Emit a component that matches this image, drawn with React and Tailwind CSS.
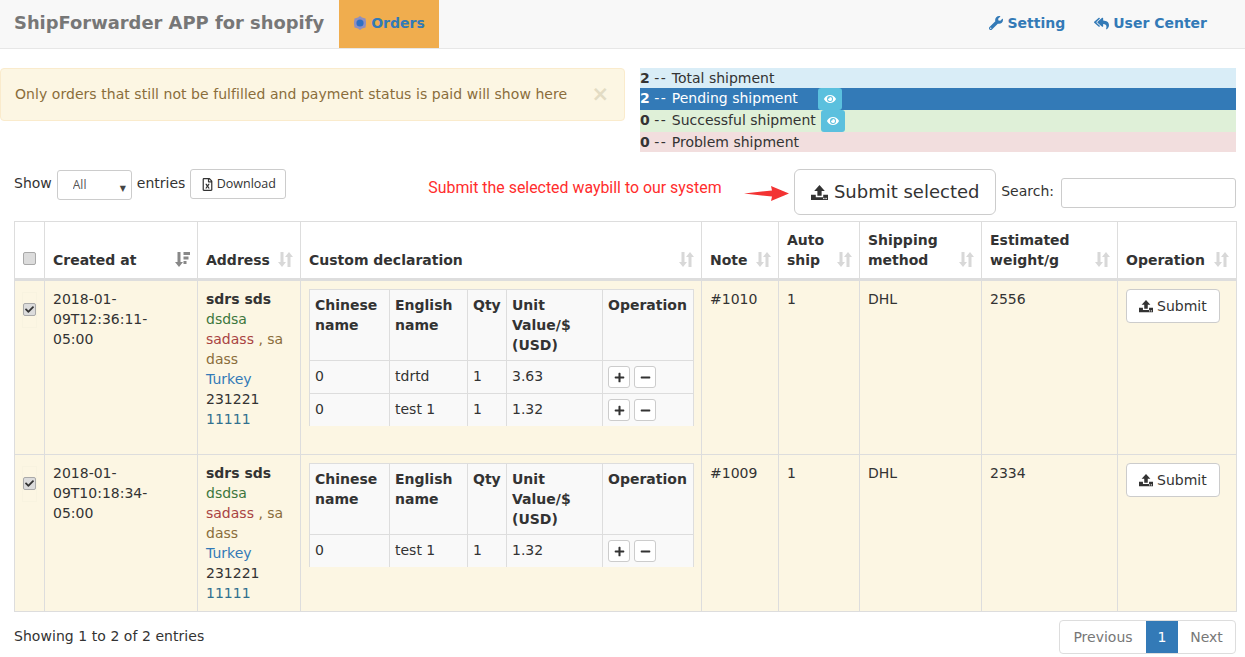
import { FaWrench, FaReplyAll, FaEye, FaPlus, FaMinus, FaRegFileExcel, FaCheck } from "react-icons/fa";

const UploadIcon = ({ size = 14 }) => (
  <svg width={size} height={size} viewBox="0 0 16 16" fill="currentColor" aria-hidden="true">
    <path d="M8 1 L13 6.5 H10 V11 H6 V6.5 H3 Z" />
    <path d="M0 10 H4.5 V12.5 H11.5 V10 H16 V15 H0 Z" />
    <rect x="11.5" y="13" width="1.2" height="1.2" fill="#fff" />
    <rect x="13.6" y="13" width="1.2" height="1.2" fill="#fff" />
  </svg>
);

const SortIcon = ({ active }) => (
  <svg width="15" height="15" viewBox="0 0 15 15" fill={active ? "#888" : "#d8d8d8"} aria-hidden="true">
    <path d="M2.5 0 H5.5 V10 H8 L4 15 L0 10 H2.5 Z" />
    {active ? (
      <path d="M8.5 0 H15 V3 H8.5 Z M8.5 4.5 H13.5 V7.5 H8.5 Z M8.5 9 H11.5 V12 H8.5 Z" />
    ) : (
      <path d="M9.5 15 H12.5 V5 H15 L11 0 L7 5 H9.5 Z" />
    )}
  </svg>
);

const OrdersIcon = () => (
  <svg width="14" height="14" viewBox="0 0 14 14" aria-hidden="true">
    <path d="M7 0 L9 1.5 L12.5 2.5 L13 6 L13 8 L12.5 11.5 L9 12.5 L7 14 L5 12.5 L1.5 11.5 L1 8 L1 6 L1.5 2.5 L5 1.5 Z" fill="#8e8fc0" />
    <circle cx="7" cy="7" r="3.6" fill="#2f6fc4" />
  </svg>
);

const Check = ({ checked }) => (
  <span className="relative block w-[13px] h-[13px]">
    <input
      type="checkbox"
      readOnly
      checked={checked}
      className="appearance-none block w-[13px] h-[13px] m-0 rounded-[2px] border border-[#a9a9a9] bg-[#dcdcdc]"
    />
    {checked && <FaCheck className="absolute left-[2px] top-[2px] text-[9px] text-[#333] pointer-events-none" />}
  </span>
);

const Th = ({ children, className = "", sort = true, active = false }) => (
  <th className={`relative border border-[#ddd] border-b-[3px] p-2 text-left align-bottom font-bold leading-5 ${className}`}>
    {children}
    {sort && (
      <span className="absolute right-[7px] bottom-[11px] leading-none">
        <SortIcon active={active} />
      </span>
    )}
  </th>
);

const Td = ({ children, className = "" }) => (
  <td className={`border border-[#ddd] p-2 align-top leading-5 ${className}`}>{children}</td>
);

const InTh = ({ children, className = "" }) => (
  <th className={`border border-[#ddd] p-[5px] text-left align-top font-bold leading-5 ${className}`}>{children}</th>
);

const InTd = ({ children, last }) => (
  <td className={`border border-[#ddd] p-[5px] align-top leading-5 ${last ? "border-b-0" : ""}`}>{children}</td>
);

const XsBtn = ({ children }) => (
  <span className="inline-flex w-[22px] h-[22px] items-center justify-center rounded-[3px] border border-[#ccc] bg-white text-[11px] text-[#333]">
    {children}
  </span>
);

function InnerTable({ items }) {
  return (
    <table className="table-fixed border-collapse w-[384px] mb-5 bg-[#f9f9f9]">
      <thead>
        <tr>
          <InTh className="w-[80px]">Chinese name</InTh>
          <InTh className="w-[78px]">English name</InTh>
          <InTh className="w-[39px]">Qty</InTh>
          <InTh className="w-[96px]">Unit Value/$ (USD)</InTh>
          <InTh className="w-[91px]">Operation</InTh>
        </tr>
      </thead>
      <tbody>
        {items.map((it, i) => {
          const last = i === items.length - 1;
          return (
            <tr key={i}>
              <InTd last={last}>0</InTd>
              <InTd last={last}>{it.name}</InTd>
              <InTd last={last}>1</InTd>
              <InTd last={last}>{it.value}</InTd>
              <InTd last={last}>
                <div className="flex gap-[4px]">
                  <XsBtn><FaPlus /></XsBtn>
                  <XsBtn><FaMinus /></XsBtn>
                </div>
              </InTd>
            </tr>
          );
        })}
      </tbody>
    </table>
  );
}

function OrderRow({ created, note, weight, items }) {
  return (
    <tr className="bg-[#fcf6e3]">
      <Td>
        <div className="mt-1 h-[34px] w-[13px] pt-[10px] shadow-[0_0_0_1px_#f8f3e0]">
          <Check checked />
        </div>
      </Td>
      <Td className="pr-[14px]">{created}</Td>
      <Td>
        <div className="font-bold">sdrs sds</div>
        <div className="text-[#3c763d]">dsdsa</div>
        <div>
          <span className="text-[#a94442]">sadass</span>
          <span className="text-[#8a6d3b]"> , sa</span>
        </div>
        <div className="text-[#8a6d3b]">dass</div>
        <div className="text-[#337ab7]">Turkey</div>
        <div>231221</div>
        <div className="text-[#31708f]">11111</div>
      </Td>
      <Td><InnerTable items={items} /></Td>
      <Td>{note}</Td>
      <Td>1</Td>
      <Td>DHL</Td>
      <Td>{weight}</Td>
      <Td>
        <button className="inline-flex h-[34px] items-center gap-1 rounded border border-[#ccc] bg-white px-3 text-[#333]">
          <UploadIcon /> Submit
        </button>
      </Td>
    </tr>
  );
}

const EyeBtn = () => (
  <span className="inline-flex w-6 h-[22px] items-center justify-center rounded-[3px] bg-[#5bc0de] text-[12px] text-white">
    <FaEye />
  </span>
);

const Count = ({ n }) => (
  <>
    <b>{n}</b> <span className="tracking-[1.5px]">--</span>{" "}
  </>
);

export default function App() {
  return (
    <div className="font-['DejaVu_Sans',sans-serif] text-sm leading-5 text-[#333] bg-white">
      {/* nav */}
      <nav className="flex h-[49px] items-stretch border-b border-[#e7e7e7] bg-[#f8f8f8]">
        <div className="flex w-[339px] items-center pb-[2px] pl-[14px] text-[17.9px] font-bold text-[#777]">
          ShipForwarder APP for shopify
        </div>
        <a className="flex w-[100px] items-center justify-center gap-1 bg-[#f0ad4e] pb-[2px] font-bold text-[#337ab7]">
          <OrdersIcon /> Orders
        </a>
        <div className="ml-auto flex items-center pb-[2px] pr-[38px] font-bold text-[#337ab7]">
          <a className="flex items-center gap-1"><FaWrench className="text-[14px]" /> Setting</a>
          <a className="ml-[29px] flex items-center gap-1"><FaReplyAll className="text-[15px]" /> User Center</a>
        </div>
      </nav>

      {/* alert + totals */}
      <div className="mt-[19px] flex pr-[9px]">
        <div className="flex h-[53px] w-[625px] items-center justify-between rounded border border-[#faebcc] bg-[#fcf6e3] pb-[2px] pl-[14px] pr-[15px] text-[#8a6d3b]">
          <span className="tracking-[0.05px]">Only orders that still not be fulfilled and payment status is paid will show here</span>
          <span className="text-[21px] font-bold text-[#e3dcc4]">×</span>
        </div>
        <div className="ml-[15px] flex-1">
          <div className="h-5 bg-[#d9edf7]"><Count n={2} />Total shipment</div>
          <div className="flex h-[22px] items-start bg-[#337ab7] text-white">
            <span><Count n={2} />Pending shipment</span>
            <span className="ml-5 flex"><EyeBtn /></span>
          </div>
          <div className="flex h-[22px] items-start bg-[#dff0d8]">
            <span><Count n={0} />Successful shipment</span>
            <span className="ml-[5px] flex"><EyeBtn /></span>
          </div>
          <div className="h-5 bg-[#f2dede]"><Count n={0} />Problem shipment</div>
        </div>
      </div>

      {/* toolbar */}
      <div className="mt-[17px] flex h-[46px] items-start pl-[14px] pr-[9px]">
        <span className="mt-[4px]">Show</span>
        <div className="relative ml-[5px] mt-[1px]">
          <select className="block h-[30px] w-[75px] appearance-none rounded-[3px] border border-[#ccc] bg-white pl-[15px] font-['Open_Sans',sans-serif] text-xs text-[#555]">
            <option>All</option>
          </select>
          <span className="pointer-events-none absolute right-[6px] top-[9px] text-[8px] text-[#444]">▼</span>
        </div>
        <span className="ml-[5px] mt-[4px]">entries</span>
        <button className="ml-[5px] flex h-[30px] w-[96px] items-center justify-center gap-[3px] rounded-[3px] border border-[#ccc] bg-white font-['Open_Sans',sans-serif] text-[12.5px] text-[#333]">
          <FaRegFileExcel className="text-[13px]" /> Download
        </button>
        <span className="ml-[142px] mt-[9px] font-['Roboto',sans-serif] text-[15.9px] text-[#ff2d2d]">
          Submit the selected waybill to our system
        </span>
        <span className="flex-1" />
        <svg className="mt-[17px]" width="45" height="15" viewBox="0 0 45 15" aria-hidden="true">
          <path d="M0 7.5 L28 4.5 L27 0 L45 7.5 L27 15 L28 10.5 Z" fill="#f33333" />
        </svg>
        <button className="ml-[5px] flex h-[46px] w-[202px] items-center justify-center gap-[6px] rounded-md border border-[#ccc] bg-white text-[18px] text-[#333]">
          <UploadIcon size={17} /> Submit selected
        </button>
        <span className="ml-[5px] mt-[12px]">Search:</span>
        <input className="ml-[7px] mt-[9px] h-[30px] w-[175px] rounded-[3px] border border-[#ccc] bg-white" />
      </div>

      {/* orders */}
      <div className="mt-[6px] pl-[14px] pr-[9px]">
        <table className="table-fixed border-collapse w-[1222px]">
          <thead>
            <tr>
              <Th className="w-[30px]" sort={false}><span className="mb-[5px] block"><Check /></span></Th>
              <Th className="w-[153px]" active>Created at</Th>
              <Th className="w-[103px]">Address</Th>
              <Th className="w-[401px]">Custom declaration</Th>
              <Th className="w-[77px]">Note</Th>
              <Th className="w-[81px]">Auto ship</Th>
              <Th className="w-[122px]">Shipping method</Th>
              <Th className="w-[136px]">Estimated weight/g</Th>
              <Th className="w-[119px]">Operation</Th>
            </tr>
          </thead>
          <tbody>
            <OrderRow
              created="2018-01-09T12:36:11-05:00"
              note="#1010"
              weight="2556"
              items={[
                { name: "tdrtd", value: "3.63" },
                { name: "test 1", value: "1.32" },
              ]}
            />
            <OrderRow
              created="2018-01-09T10:18:34-05:00"
              note="#1009"
              weight="2334"
              items={[{ name: "test 1", value: "1.32" }]}
            />
          </tbody>
        </table>
      </div>

      {/* footer */}
      <div className="mt-2 flex items-start justify-between pl-[14px] pr-[9px]">
        <span className="mt-[6px] tracking-[0.05px]">Showing 1 to 2 of 2 entries</span>
        <div className="flex h-[34px] items-stretch rounded border border-[#ddd] bg-white text-[#777]">
          <span className="flex w-[86px] items-center justify-center">Previous</span>
          <span className="flex w-[32px] items-center justify-center bg-[#337ab7] text-white">1</span>
          <span className="flex w-[57px] items-center justify-center">Next</span>
        </div>
      </div>
    </div>
  );
}
